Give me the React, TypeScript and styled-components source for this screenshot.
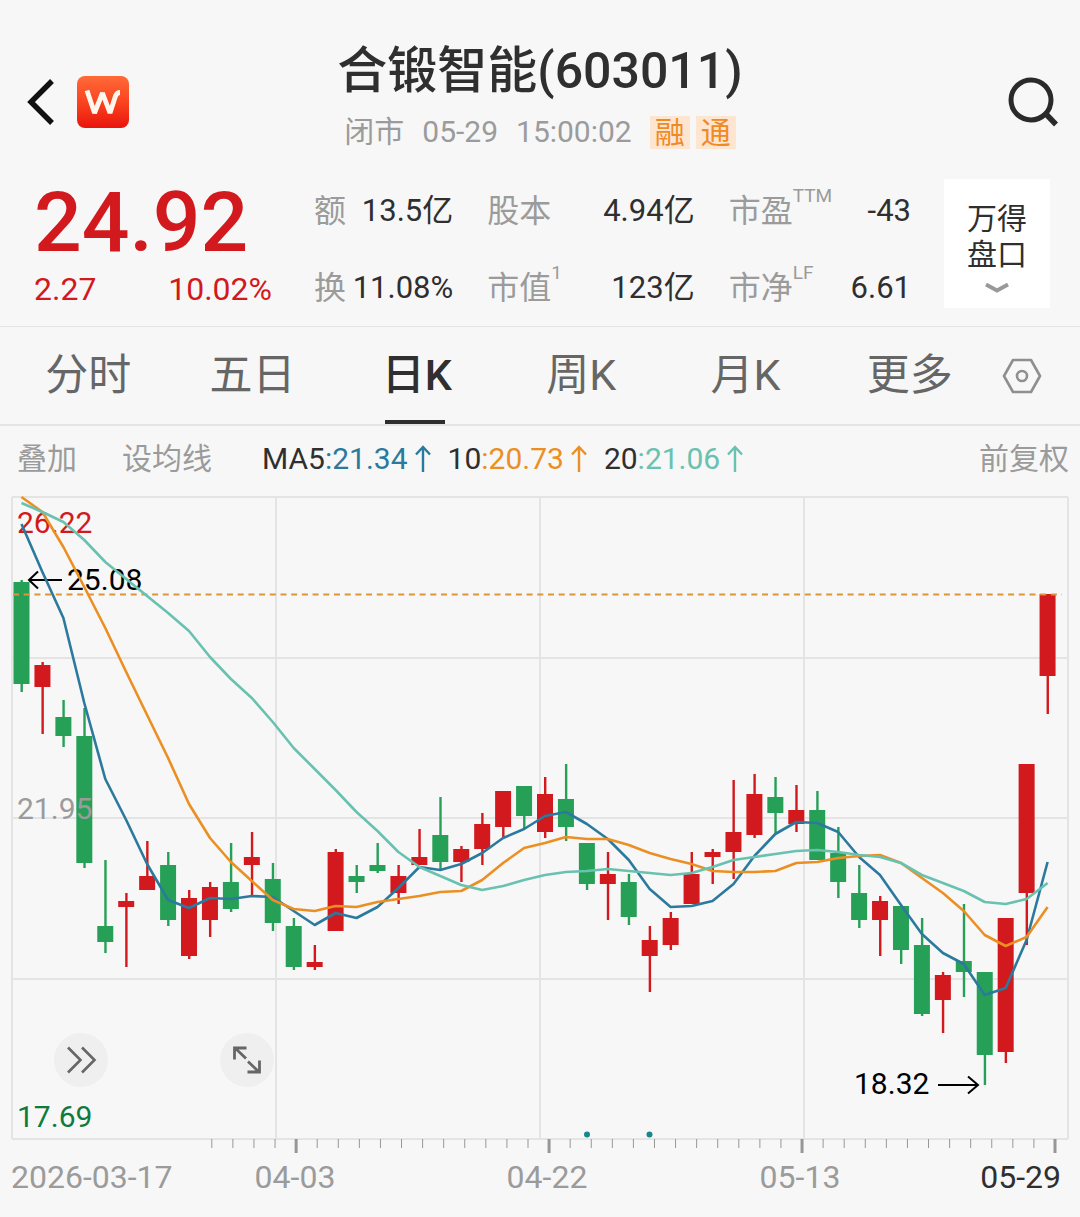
import React from "react";
import styled, { createGlobalStyle } from "styled-components";

const palette = {
  page: "#f7f7f7",
  ink: "#2f2f2f",
  tab: "#666666",
  muted: "#9b9b9b",
  rule: "#e4e4e4",
  rise: "#d2191d",
  fall: "#27a057",
  floor: "#0f7a40",
  ma5: "#2b7a9e",
  ma10: "#ec8f23",
  ma20: "#69c1b0",
};

const fontStack = `Roboto, "Noto Sans CJK SC", sans-serif`;

const GlobalStyle = createGlobalStyle`
  *, *::before, *::after { box-sizing: border-box; }
  body { margin: 0; background: ${palette.page}; }
  button { font: inherit; color: inherit; background: none; border: 0; padding: 0; margin: 0; cursor: pointer; }
  h1, p, dl, dd { margin: 0; }
  svg { display: block; }
`;

const Page = styled.main`
  color: ${palette.ink};
  font-family: ${fontStack};
  font-size: 30px;
`;

const Header = styled.header`
  display: grid;
  grid-template-columns: 1fr auto 1fr;
  align-items: center;
  padding: 39px 20px 29px;
`;

const HeaderSide = styled.div<{ $end?: boolean }>`
  display: flex;
  align-items: center;
  justify-content: ${(p) => (p.$end ? "flex-end" : "flex-start")};
  gap: 21px;
  padding-top: 14px;
`;

const HeaderTitle = styled.div`
  display: flex;
  flex-direction: column;
  align-items: center;
  gap: 11px;
`;

const StockName = styled.h1`
  font-size: 50px;
  font-weight: 500;
  line-height: 64px;
  white-space: nowrap;
`;

const Status = styled.p`
  display: flex;
  align-items: center;
  gap: 18px;
  line-height: 36px;
  color: ${palette.muted};
  white-space: nowrap;
`;

const Tags = styled.span`
  display: flex;
  gap: 6px;
`;

const Tag = styled.span`
  width: 40px;
  line-height: 33px;
  text-align: center;
  color: #f08a24;
  background: #fde5d0;
`;

const Quote = styled.section`
  display: grid;
  grid-template-columns: 238px 1fr 106px;
  column-gap: 33px;
  padding: 0 30px 18px 34px;
  border-bottom: 1px solid ${palette.rule};
`;

const PriceBlock = styled.div`
  display: flex;
  flex-direction: column;
  gap: 4px;
  color: ${palette.rise};
`;

const Price = styled.strong`
  font-size: 84px;
  font-weight: 500;
  line-height: 88px;
`;

const Change = styled.div`
  display: flex;
  justify-content: space-between;
  font-size: 32px;
  line-height: 36px;
`;

const Stats = styled.dl`
  display: grid;
  grid-template-columns: 139fr 207fr 182fr;
  gap: 37px 34px;
  padding: 12px 0 0 9px;
`;

const Stat = styled.div`
  display: flex;
  justify-content: space-between;
  line-height: 40px;
  white-space: nowrap;
`;

const StatLabel = styled.dt`
  display: flex;
  font-size: 32px;
  color: ${palette.muted};
`;

const StatValue = styled.dd`
  font-size: 31px;
`;

const StatNote = styled.sup`
  font-size: 19px;
  line-height: 1;
  margin-top: -5px;
`;

const DepthButton = styled.button`
  display: flex;
  flex-direction: column;
  align-items: center;
  justify-content: center;
  && { background: #ffffff; }
  padding-top: 8px;
  line-height: 36px;

  span { width: 60px; }
  svg { margin-top: 9px; }
`;

const Tabs = styled.nav`
  display: flex;
  align-items: stretch;
  padding: 0 28px 0 6px;
  border-bottom: 2px solid ${palette.rule};
`;

const Tab = styled.button<{ $active?: boolean }>`
  && {
    flex: 1;
    position: relative;
    font-size: 43px;
    font-weight: ${(p) => (p.$active ? 500 : 400)};
    line-height: 97px;
    color: ${(p) => (p.$active ? palette.ink : palette.tab)};
  }

  &::after {
    content: "";
    display: ${(p) => (p.$active ? "block" : "none")};
    position: absolute;
    left: 50%;
    bottom: 0;
    width: 60px;
    height: 4px;
    margin-left: -32px;
    background: ${palette.ink};
  }
`;

const SettingsButton = styled.button`
  display: flex;
  align-items: center;
  justify-content: center;
  width: 60px;
`;

const Toolbar = styled.div`
  display: flex;
  align-items: center;
  padding: 13px 11px 11px 17px;
  line-height: 40px;
  white-space: nowrap;
`;

const TextButton = styled.button`
  && { color: ${palette.muted}; }
  margin-right: 45px;
  &:last-child { margin: 0 0 0 auto; }
`;

const Averages = styled.div`
  display: flex;
  gap: 17px;
  margin-left: 5px;
`;

const Average = styled.span<{ $color: string }>`
  display: flex;
  align-items: center;
  color: ${(p) => p.$color};
  b { font-weight: 400; color: ${palette.ink}; }
  svg { margin-left: 7px; }
`;

const ChartArea = styled.section`
  position: relative;
`;

const ChartSvg = styled.svg`
  width: 100%;
  height: auto;
  font-family: ${fontStack};
`;

const RoundButton = styled.button<{ $left: number }>`
  && {
    position: absolute;
    left: ${(p) => p.$left}%;
    bottom: 130px;
    width: 54px;
    height: 54px;
    border-radius: 50%;
    background: #efefef;
    display: grid;
    place-items: center;
  }
`;

type Candle = [kind: "up" | "down", top: number, bottom: number, high: number, low: number];

const candles: Candle[] = [
  ["down", 582, 684, 580, 692], ["up", 665, 687, 662, 734], ["down", 717, 736, 700, 747],
  ["down", 736, 863, 708, 868], ["down", 926, 942, 860, 953], ["up", 901, 907, 893, 967],
  ["up", 876, 890, 841, 890], ["down", 865, 920, 852, 926], ["up", 898, 956, 890, 959],
  ["up", 887, 920, 882, 937], ["down", 882, 909, 843, 912], ["up", 857, 865, 832, 897],
  ["down", 879, 923, 863, 931], ["down", 926, 967, 918, 970], ["up", 962, 967, 945, 970],
  ["up", 852, 931, 849, 931], ["down", 876, 882, 865, 893], ["down", 865, 871, 843, 873],
  ["up", 876, 893, 865, 904], ["up", 857, 865, 829, 865], ["down", 835, 862, 797, 870],
  ["up", 849, 862, 846, 882], ["up", 824, 849, 813, 865], ["up", 791, 827, 791, 837],
  ["down", 786, 816, 786, 828], ["up", 794, 832, 777, 838], ["down", 799, 827, 764, 841],
  ["down", 843, 884, 843, 890], ["up", 874, 884, 852, 920], ["down", 882, 917, 874, 925],
  ["up", 940, 956, 926, 992], ["up", 918, 945, 912, 950], ["up", 874, 904, 852, 904],
  ["up", 852, 857, 849, 884], ["up", 832, 852, 780, 879], ["up", 794, 835, 774, 838],
  ["down", 797, 813, 777, 833], ["up", 810, 824, 785, 832], ["down", 810, 860, 791, 860],
  ["down", 853, 882, 827, 898], ["down", 893, 920, 865, 928], ["up", 901, 920, 896, 956],
  ["down", 906, 950, 906, 964], ["down", 945, 1014, 918, 1016], ["up", 975, 1000, 972, 1033],
  ["down", 961, 972, 904, 997], ["down", 972, 1055, 972, 1085], ["up", 918, 1052, 918, 1063],
  ["up", 764, 893, 764, 945], ["up", 594, 676, 594, 714],
];

const ma5 = [
  524, 572, 618, 703, 779, 820, 864, 900, 908, 898, 899, 896, 897, 911, 925, 913, 918, 907, 888, 867,
  870, 864, 853, 838, 829, 816, 812, 824, 839, 860, 889, 907, 906, 901, 884, 856, 834, 822, 823, 832,
  857, 875, 905, 934, 953, 964, 995, 988, 940, 862,
];
const ma10 = [
  497, 512, 547, 587, 628, 672, 715, 758, 804, 838, 862, 881, 900, 909, 911, 906, 907, 902, 899, 896,
  892, 891, 880, 863, 848, 843, 837, 839, 839, 845, 853, 859, 864, 871, 872, 872, 871, 863, 862, 858,
  856, 855, 863, 878, 893, 911, 935, 946, 937, 907,
];
const ma20 = [
  503, 512, 522, 540, 562, 579, 596, 613, 631, 657, 679, 698, 722, 748, 769, 790, 812, 831, 852, 867,
  876, 885, 890, 886, 880, 875, 872, 871, 869, 871, 873, 875, 873, 867, 860, 857, 854, 851, 850, 852,
  855, 857, 863, 875, 883, 891, 902, 904, 899, 883,
];

const candleX = (i: number) => 21.5 + i * 20.94;
const linePoints = (ys: number[]) => ys.map((y, i) => `${candleX(i).toFixed(1)},${y}`).join(" ");
const tickXs = Array.from({ length: 41 }, (_, k) => ({ x: 1055 - k * 21.08, major: k % 12 === 0 }));

const dates = [
  { text: "2026-03-17", x: 11, anchor: "start", color: palette.muted },
  { text: "04-03", x: 295, anchor: "middle", color: palette.muted },
  { text: "04-22", x: 547, anchor: "middle", color: palette.muted },
  { text: "05-13", x: 800, anchor: "middle", color: palette.muted },
  { text: "05-29", x: 1061, anchor: "end", color: palette.ink },
] as const;

function Chart() {
  return (
    <ChartSvg viewBox="0 490 1080 727" role="img" aria-label="日K线图">
      <g stroke={palette.rule} strokeWidth="2">
        {[12, 276, 540, 804, 1068].map((x) => <line key={x} x1={x} x2={x} y1="497" y2="1139" />)}
        {[497, 658, 818, 979, 1139].map((y) => <line key={y} x1="12" x2="1068" y1={y} y2={y} />)}
      </g>
      {candles.map(([kind, top, bottom, high, low], i) => (
        <g key={i} fill={kind === "up" ? palette.rise : palette.fall}>
          <rect x={candleX(i) - 1} y={high} width="2.4" height={low - high} />
          <rect x={candleX(i) - 8} y={top} width="16" height={bottom - top} />
        </g>
      ))}
      <line x1="13" x2="1062" y1="594.5" y2="594.5" stroke="#dd9638" strokeWidth="2" strokeDasharray="6 4.7" />
      <g fontSize="30">
        <text x="17" y="533" fill={palette.rise}>26.22</text>
        <text x="17" y="819" fill={palette.muted}>21.95</text>
        <text x="17" y="1127" fill={palette.floor}>17.69</text>
        <text x="67" y="590" fill="#000">25.08</text>
        <text x="854" y="1094" fill="#000">18.32</text>
      </g>
      <g fill="none" stroke="#000" strokeWidth="2">
        <path d="M62 580H29M38 571.5L29 580L38 588.5" />
        <path d="M938 1085H978M968 1076.5L978 1085L968 1093.5" />
      </g>
      <g fill="none" strokeWidth="2.6" strokeLinejoin="round">
        <polyline points={linePoints(ma5)} stroke={palette.ma5} />
        <polyline points={linePoints(ma10)} stroke={palette.ma10} />
        <polyline points={linePoints(ma20)} stroke={palette.ma20} />
      </g>
      <circle cx="587" cy="1134.5" r="3" fill="#16888a" />
      <circle cx="649.5" cy="1134.5" r="3" fill="#16888a" />
      {tickXs.map(({ x, major }) => (
        <line key={x} x1={x} x2={x} y1="1139" y2={major ? 1153 : 1148} stroke="#979797" strokeWidth={major ? 3 : 1} />
      ))}
      <g fontSize="32">
        {dates.map((d) => (
          <text key={d.text} x={d.x} y="1188" textAnchor={d.anchor} fill={d.color}>{d.text}</text>
        ))}
      </g>
    </ChartSvg>
  );
}

const UpArrow = () => (
  <svg width="16" height="28" viewBox="0 0 16 28" fill="none" stroke="currentColor" strokeWidth="2.4" aria-hidden="true">
    <path d="M8 27V2M1 9.5L8 2L15 9.5" />
  </svg>
);

const stats = [
  { label: "额", value: "13.5亿" },
  { label: "股本", value: "4.94亿" },
  { label: "市盈", note: "TTM", value: "-43" },
  { label: "换", value: "11.08%" },
  { label: "市值", note: "1", value: "123亿" },
  { label: "市净", note: "LF", value: "6.61" },
];

const averages = [
  { name: "MA5", value: "21.34", color: palette.ma5 },
  { name: "10", value: "20.73", color: palette.ma10 },
  { name: "20", value: "21.06", color: palette.ma20 },
];

const tabs = ["分时", "五日", "日K", "周K", "月K", "更多"];

export default function App() {
  const [active, setActive] = React.useState("日K");

  return (
    <Page>
      <GlobalStyle />
      <Header>
        <HeaderSide>
          <button aria-label="返回">
            <svg width="36" height="52" viewBox="0 0 36 52" fill="none" stroke="#111" strokeWidth="5.4">
              <path d="M32 5L11 26L32 47" />
            </svg>
          </button>
          <svg width="52" height="52" viewBox="0 0 52 52" role="img" aria-label="Wind">
            <defs>
              <linearGradient id="brand" x1="0" y1="0" x2="0" y2="1">
                <stop offset="0" stopColor="#ff6a38" />
                <stop offset="0.5" stopColor="#fb4420" />
                <stop offset="1" stopColor="#e8150c" />
              </linearGradient>
            </defs>
            <rect width="52" height="52" rx="8" fill="url(#brand)" />
            <path
              d="M10 14.5L17.5 37L25.5 17L33 37L38.5 20Q40 16.5 43 16.5"
              fill="none" stroke="#fff6ee" strokeWidth="4.8" strokeLinejoin="bevel"
            />
          </svg>
        </HeaderSide>
        <HeaderTitle>
          <StockName>合锻智能(603011)</StockName>
          <Status>
            <span>闭市</span>
            <span>05-29</span>
            <span>15:00:02</span>
            <Tags><Tag>融</Tag><Tag>通</Tag></Tags>
          </Status>
        </HeaderTitle>
        <HeaderSide $end>
          <button aria-label="搜索">
            <svg width="52" height="52" viewBox="0 0 52 52" fill="none" stroke="#2a2a2a" strokeWidth="5">
              <circle cx="23" cy="24" r="20" />
              <path d="M37 37L48 48.5" strokeWidth="5.5" />
            </svg>
          </button>
        </HeaderSide>
      </Header>

      <Quote>
        <PriceBlock>
          <Price>24.92</Price>
          <Change><span>2.27</span><span>10.02%</span></Change>
        </PriceBlock>
        <Stats>
          {stats.map((s) => (
            <Stat key={s.label}>
              <StatLabel>{s.label}{s.note && <StatNote>{s.note}</StatNote>}</StatLabel>
              <StatValue>{s.value}</StatValue>
            </Stat>
          ))}
        </Stats>
        <DepthButton>
          <span>万得盘口</span>
          <svg width="24" height="12" viewBox="0 0 24 12" fill="none" stroke="#999" strokeWidth="4" aria-hidden="true">
            <path d="M1 2.5L12 8.5L23 2.5" />
          </svg>
        </DepthButton>
      </Quote>

      <Tabs>
        {tabs.map((t) => (
          <Tab key={t} $active={t === active} onClick={() => setActive(t)}>{t}</Tab>
        ))}
        <SettingsButton aria-label="设置">
          <svg width="40" height="36" viewBox="0 0 40 36" fill="none" stroke="#8f8f8f" strokeWidth="2.6" strokeLinejoin="round">
            <path d="M2 18L11 2H29L38 18L29 34H11Z" />
            <circle cx="20" cy="18" r="5" />
          </svg>
        </SettingsButton>
      </Tabs>

      <Toolbar>
        <TextButton>叠加</TextButton>
        <TextButton>设均线</TextButton>
        <Averages>
          {averages.map((a) => (
            <Average key={a.name} $color={a.color}>
              <b>{a.name}</b>:{a.value}<UpArrow />
            </Average>
          ))}
        </Averages>
        <TextButton>前复权</TextButton>
      </Toolbar>

      <ChartArea>
        <Chart />
        <RoundButton $left={5} aria-label="快进">
          <svg width="32" height="28" viewBox="0 0 32 28" fill="none" stroke="#666" strokeWidth="2.6">
            <path d="M3 1.5L15.500 14L3 26.5M17 1.5L29.5 14L17 26.5" />
          </svg>
        </RoundButton>
        <RoundButton $left={20.4} aria-label="全屏">
          <svg width="28" height="28" viewBox="0 0 28 28" fill="none" stroke="#666" strokeWidth="2.8">
            <path d="M1.5 13.5V2H13.5M2 2L13 12.5M26.5 14.5V26H14.5M26 26L15 15.5" />
          </svg>
        </RoundButton>
      </ChartArea>
    </Page>
  );
}
